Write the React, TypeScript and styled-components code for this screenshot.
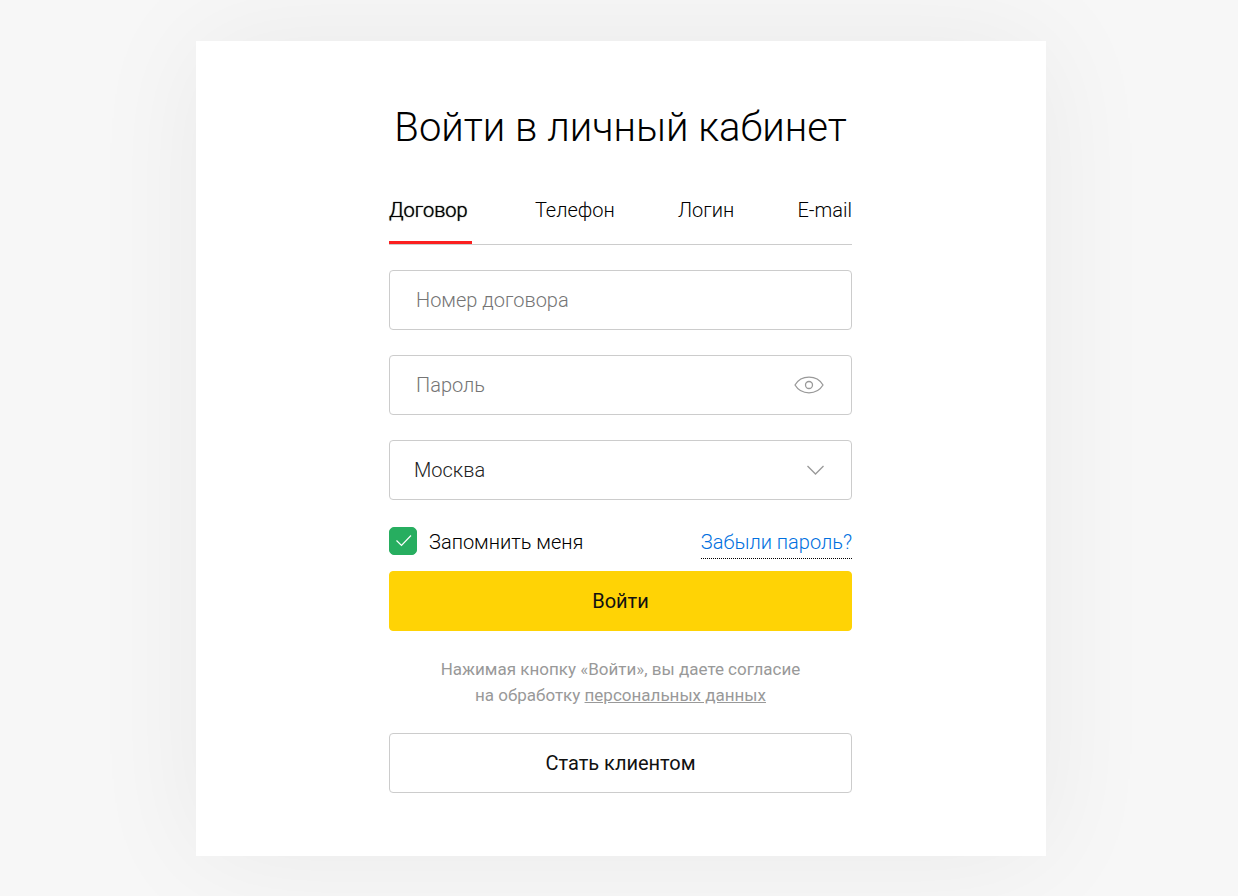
import React from "react";
import styled, { createGlobalStyle } from "styled-components";

const Global = createGlobalStyle`
  *, *::before, *::after { box-sizing: border-box; }
  body { margin: 0; background: #f7f7f7; font-family: Roboto, "Liberation Sans", sans-serif; font-weight: 300; color: #000; }
  button, input, select { font: inherit; color: inherit; }
`;

const Page = styled.div`
  min-height: 100vh;
  display: flex;
  justify-content: center;
  align-items: flex-start;
  padding: 41px 16px 40px 20px;
  overflow: hidden;
`;

const Card = styled.main`
  width: 100%;
  max-width: 850px;
  padding: 61px 25px 63px 24px;
  background: #fff;
  box-shadow: 0 0 110px rgba(0, 0, 0, 0.06);
`;

const Form = styled.form`
  display: flex;
  flex-direction: column;
  max-width: 463px;
  margin: 0 auto;
`;

const Title = styled.h1`
  margin: 0 0 31px;
  font-size: 40px;
  line-height: 52px;
  font-weight: 300;
  text-align: center;
`;

const Tabs = styled.div`
  display: flex;
  justify-content: space-between;
  height: 60px;
  margin-bottom: 25px;
  border-bottom: 1px solid #ccc;
`;

const Tab = styled.button<{ $active?: boolean }>`
  height: 59px;
  padding: 0 ${(p) => (p.$active ? "4px" : "0")} 6px 0;
  border: 0;
  border-bottom: 3px solid ${(p) => (p.$active ? "#fb2020" : "transparent")};
  background: none;
  font-size: 20px;
  line-height: 24px;
  font-weight: 300;
  text-shadow: ${(p) => (p.$active ? "0 0 1px #000" : "none")};
  cursor: pointer;
`;

const Field = styled.div`
  position: relative;
  display: flex;
  height: 60px;
  margin-bottom: 25px;
`;

const Input = styled.input`
  flex: 1;
  min-width: 0;
  padding: 0 26px;
  border: 1px solid #ccc;
  border-radius: 4px;
  background: #fff;
  font-size: 20px;
  &::placeholder { color: #757575; opacity: 1; }
`;

const Select = styled.select`
  flex: 1;
  appearance: none;
  padding: 0 24px;
  border: 1px solid #ccc;
  border-radius: 4px;
  background: #fff;
  color: #222;
  font-size: 20px;
`;

const EyeButton = styled.button`
  position: absolute;
  top: 20px;
  right: 28px;
  display: flex;
  padding: 0;
  border: 0;
  background: none;
  cursor: pointer;
`;

const Chevron = styled.svg`
  position: absolute;
  top: 24px;
  right: 28px;
  pointer-events: none;
`;

const Row = styled.div`
  display: flex;
  justify-content: space-between;
  align-items: center;
  height: 34px;
  margin-bottom: 12px;
  font-size: 20px;
  line-height: 32px;
`;

const Remember = styled.label`
  display: flex;
  align-items: center;
  gap: 12px;
  cursor: pointer;
`;

const CheckWrap = styled.span`
  position: relative;
  display: flex;
  margin-bottom: 2px;
`;

const Checkbox = styled.input`
  appearance: none;
  width: 28px;
  height: 28px;
  margin: 0;
  border: 1px solid #ccc;
  border-radius: 5px;
  &:checked { background: #27ae60; border-color: #27ae60; }
`;

const Tick = styled.svg`
  position: absolute;
  inset: 0;
  pointer-events: none;
`;

const Forgot = styled.a`
  border-bottom: 1px dotted #000;
  color: #0070e0;
  text-decoration: none;
`;

const Button = styled.button<{ $primary?: boolean }>`
  height: 60px;
  border: 1px solid ${(p) => (p.$primary ? "#ffd305" : "#ccc")};
  border-radius: 4px;
  background: ${(p) => (p.$primary ? "#ffd305" : "#fff")};
  color: #111;
  font-size: 20px;
  font-weight: 400;
  cursor: pointer;
`;

const Note = styled.p`
  margin: 25px 0;
  font-size: 17px;
  line-height: 26px;
  font-weight: 400;
  color: #999;
  text-align: center;
  a { color: inherit; }
`;

const tabs = ["Договор", "Телефон", "Логин", "E-mail"];

export default function App() {
  return (
    <>
      <Global />
      <Page>
        <Card>
          <Form onSubmit={(e) => e.preventDefault()}>
            <Title>Войти в личный кабинет</Title>
            <Tabs role="tablist">
              {tabs.map((t, i) => (
                <Tab key={t} type="button" role="tab" aria-selected={i === 0} $active={i === 0}>{t}</Tab>
              ))}
            </Tabs>
            <Field>
              <Input type="text" aria-label="Номер договора" placeholder="Номер договора" />
            </Field>
            <Field>
              <Input type="password" aria-label="Пароль" placeholder="Пароль" />
              <EyeButton type="button" aria-label="Показать пароль">
                <svg width="30" height="20" viewBox="0 0 30 20" fill="none" stroke="#999" strokeWidth="1.3">
                  <path d="M1 10C4 5 9 2.200 15 2.200S26 5 29 10C26 15 21 17.800 15 17.800S4 15 1 10Z" />
                  <circle cx="15" cy="10" r="3.500" />
                </svg>
              </EyeButton>
            </Field>
            <Field>
              <Select aria-label="Город" defaultValue="Москва">
                <option>Москва</option>
              </Select>
              <Chevron width="18" height="12" viewBox="0 0 18 12" fill="none" stroke="#999" strokeWidth="1.3">
                <path d="M1.500 2L9.500 10L17.500 2" />
              </Chevron>
            </Field>
            <Row>
              <Remember>
                <CheckWrap>
                  <Checkbox type="checkbox" defaultChecked />
                  <Tick width="28" height="28" viewBox="0 0 28 28" fill="none" stroke="#fff" strokeWidth="1.2">
                    <path d="M7.500 13.500L12.500 18.500L22 8.500" />
                  </Tick>
                </CheckWrap>
                Запомнить меня
              </Remember>
              <Forgot href="#">Забыли пароль?</Forgot>
            </Row>
            <Button type="submit" $primary>Войти</Button>
            <Note>
              Нажимая кнопку «Войти», вы даете согласие
              <br />
              на обработку <a href="#">персональных данных</a>
            </Note>
            <Button type="button">Стать клиентом</Button>
          </Form>
        </Card>
      </Page>
    </>
  );
}
